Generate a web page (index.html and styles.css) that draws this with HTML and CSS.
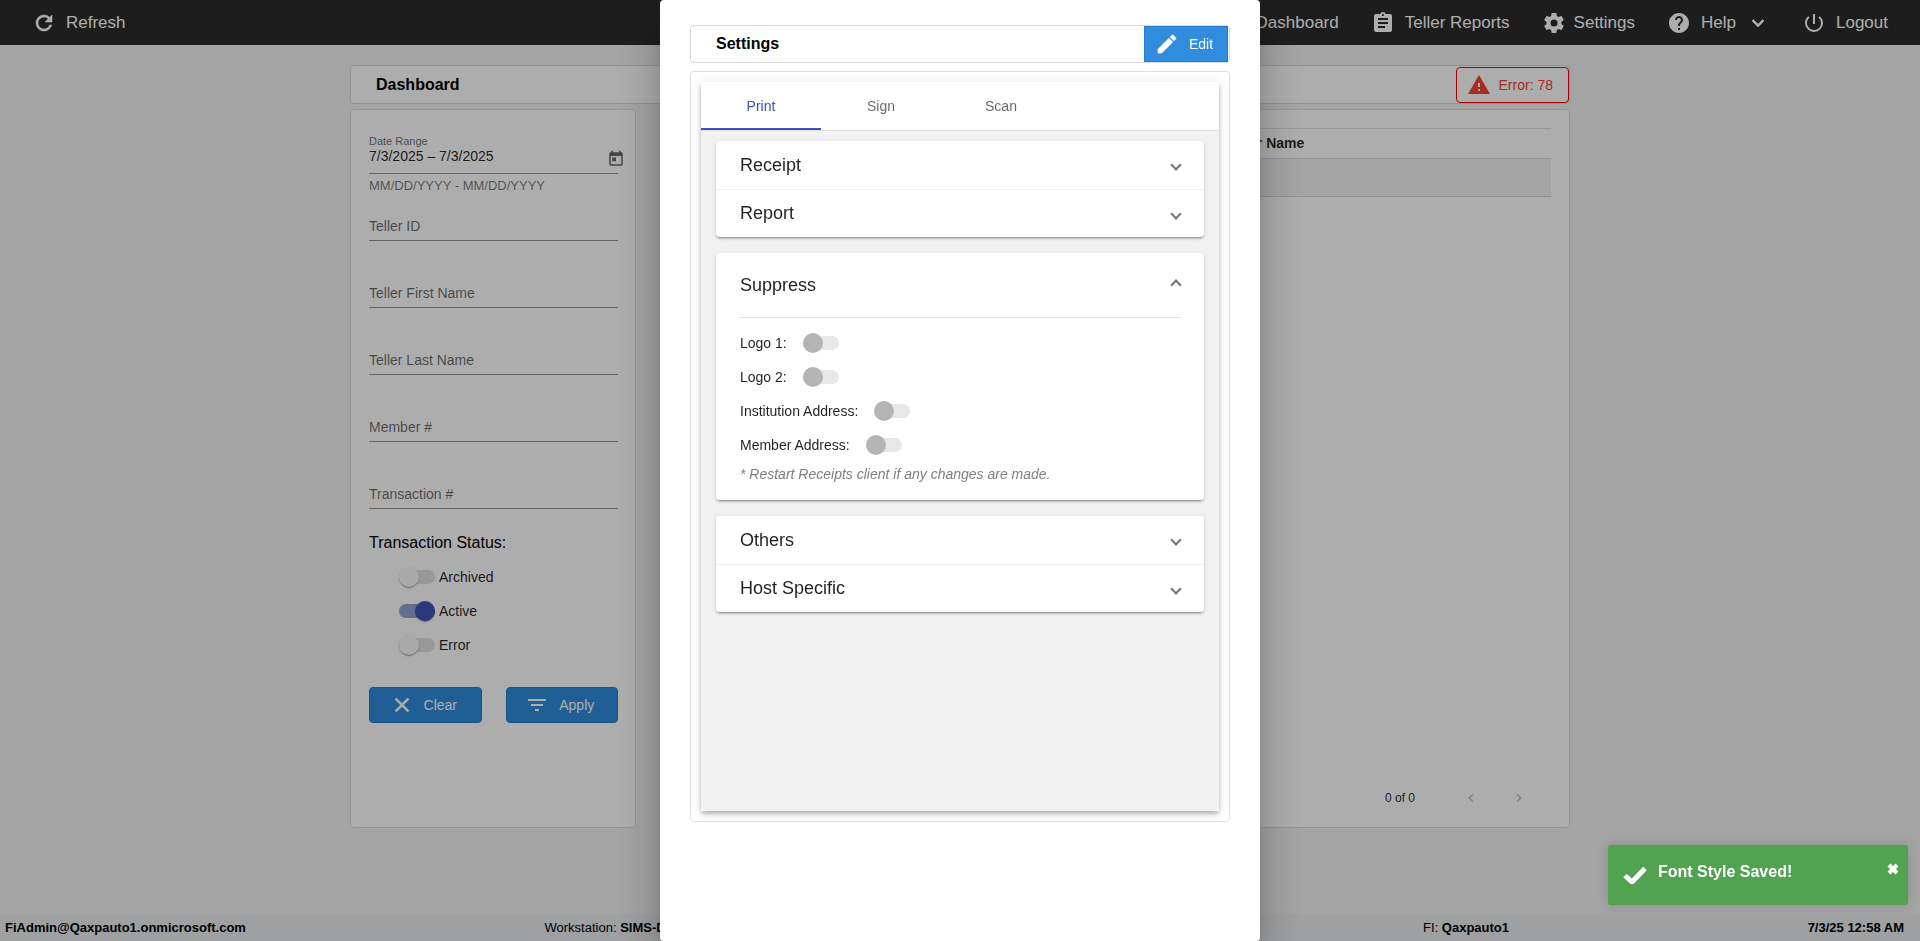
FILE: index.html
```html
<!DOCTYPE html>
<html lang="en">
<head>
  <meta charset="UTF-8" />
  <meta name="viewport" content="width=device-width, initial-scale=1.0"/>
  <title>Receipts - Settings</title>
  <link rel="stylesheet" href="styles.css">
</head>
<body>
  <header class="topbar">
    <a class="nav-item" href="#refresh">
      <svg class="icon" viewBox="0 0 24 24"><path d="M17.65 6.35A7.96 7.96 0 0 0 12 4a8 8 0 1 0 7.73 10h-2.08A6 6 0 1 1 12 6c1.66 0 3.14.69 4.22 1.78L13 11h7V4l-2.35 2.35z" stroke="currentColor" stroke-width=".6"/></svg>
      Refresh
    </a>
    <nav class="nav">
      <a class="nav-item" href="#dashboard">Dashboard</a>
      <a class="nav-item" href="#reports">
        <svg class="icon" viewBox="0 0 24 24"><path d="M19 3h-4.18C14.4 1.84 13.3 1 12 1s-2.4.84-2.82 2H5c-1.1 0-2 .9-2 2v14c0 1.1.9 2 2 2h14c1.1 0 2-.9 2-2V5c0-1.1-.9-2-2-2zm-7 0c.55 0 1 .45 1 1s-.45 1-1 1-1-.45-1-1 .45-1 1-1zm2 14H7v-2h7v2zm3-4H7v-2h10v2zm0-4H7V7h10v2z"/></svg>
        Teller Reports
      </a>
      <a class="nav-item nav-item-tight" href="#settings">
        <svg class="icon" viewBox="0 0 24 24"><path d="M19.43 12.98c.04-.32.07-.64.07-.98s-.03-.66-.07-.98l2.11-1.65c.19-.15.24-.42.12-.64l-2-3.46c-.12-.22-.39-.3-.61-.22l-2.49 1c-.52-.4-1.08-.73-1.69-.98l-.38-2.65C14.46 2.18 14.25 2 14 2h-4c-.25 0-.46.18-.49.42l-.38 2.65c-.61.25-1.17.59-1.69.98l-2.49-1c-.23-.09-.49 0-.61.22l-2 3.46c-.13.22-.07.49.12.64l2.11 1.65c-.04.32-.07.65-.07.98s.03.66.07.98l-2.11 1.65c-.19.15-.24.42-.12.64l2 3.46c.12.22.39.3.61.22l2.49-1c.52.4 1.08.73 1.69.98l.38 2.65c.03.24.24.42.49.42h4c.25 0 .46-.18.49-.42l.38-2.65c.61-.25 1.17-.59 1.69-.98l2.49 1c.23.09.49 0 .61-.22l2-3.46c.12-.22.07-.49-.12-.64l-2.11-1.65zM12 15.5a3.5 3.5 0 1 1 0-7 3.5 3.5 0 0 1 0 7z"/></svg>
        Settings
      </a>
      <a class="nav-item" href="#help">
        <svg class="icon" viewBox="0 0 24 24"><path d="M12 2C6.48 2 2 6.48 2 12s4.48 10 10 10 10-4.48 10-10S17.52 2 12 2zm1 17h-2v-2h2v2zm2.07-7.75l-.9.92C13.45 12.9 13 13.5 13 15h-2v-.5c0-1.1.45-2.1 1.17-2.83l1.24-1.26c.37-.36.59-.86.59-1.41 0-1.1-.9-2-2-2s-2 .9-2 2H8c0-2.21 1.79-4 4-4s4 1.79 4 4c0 .88-.36 1.68-.93 2.25z"/></svg>
        Help
        <svg class="icon" viewBox="0 0 24 24"><path d="M7.41 8.59L12 13.17l4.59-4.58L18 10l-6 6-6-6z" stroke="currentColor" stroke-width=".6"/></svg>
      </a>
      <a class="nav-item" href="#logout">
        <svg class="icon" viewBox="0 0 24 24"><path d="M13 3h-2v10h2V3zm4.83 2.17l-1.42 1.42A6.92 6.92 0 0 1 19 12a7 7 0 1 1-11.42-5.42L6.17 5.17A8.93 8.93 0 0 0 3 12a9 9 0 1 0 18 0c0-2.74-1.23-5.18-3.17-6.83z"/></svg>
        Logout
      </a>
    </nav>
  </header>

  <main class="workspace">
    <div class="title-bar">
      <h1>Dashboard</h1>
      <button class="error-btn" type="button">
        <svg class="icon" viewBox="0 0 24 24"><path d="M1 21h22L12 2 1 21zm12-3h-2v-2h2v2zm0-4h-2v-4h2v4z"/></svg>
        Error: 78
      </button>
    </div>

    <div class="columns">
      <form class="card filters">
        <label class="date-label" for="dateRange">Date Range</label>
        <div class="date-row">
          <input type="text" id="dateRange" value="7/3/2025 – 7/3/2025">
          <button class="date-btn" type="button" aria-label="Open calendar">
            <svg viewBox="0 0 24 24"><path d="M19 3h-1V1h-2v2H8V1H6v2H5c-1.11 0-2 .9-2 2v14c0 1.1.89 2 2 2h14c1.1 0 2-.9 2-2V5c0-1.1-.9-2-2-2zm0 16H5V8h14v11zM7 10h5v5H7z"/></svg>
          </button>
        </div>
        <div class="hint">MM/DD/YYYY - MM/DD/YYYY</div>

        <div class="fields">
          <input type="text" placeholder="Teller ID" aria-label="Teller ID">
          <input type="text" placeholder="Teller First Name" aria-label="Teller First Name">
          <input type="text" placeholder="Teller Last Name" aria-label="Teller Last Name">
          <input type="text" placeholder="Member #" aria-label="Member #">
          <input type="text" placeholder="Transaction #" aria-label="Transaction #">
        </div>

        <h2>Transaction Status:</h2>
        <div class="status-list">
          <label class="toggle-row"><input class="toggle" type="checkbox">Archived</label>
          <label class="toggle-row"><input class="toggle" type="checkbox" checked>Active</label>
          <label class="toggle-row"><input class="toggle" type="checkbox">Error</label>
        </div>

        <div class="actions">
          <button class="btn" type="reset">
            <svg class="icon" viewBox="0 0 24 24"><path d="M19 6.41L17.59 5 12 10.59 6.41 5 5 6.41 10.59 12 5 17.59 6.41 19 12 13.41 17.59 19 19 17.59 13.41 12z" stroke="currentColor" stroke-width=".6"/></svg>
            Clear
          </button>
          <button class="btn" type="button">
            <svg class="icon" viewBox="0 0 24 24"><path d="M10 18h4v-2h-4v2zM3 6v2h18V6H3zm3 7h12v-2H6v2z"/></svg>
            Apply
          </button>
        </div>
      </form>

      <section class="card results">
        <table>
          <thead>
            <tr><th></th><th class="name-col">Teller Name</th></tr>
          </thead>
          <tbody>
            <tr><td colspan="2"></td></tr>
          </tbody>
        </table>
        <div class="pager">
          <span>0 of 0</span>
          <button type="button" disabled aria-label="Previous page"><svg viewBox="0 0 24 24"><path d="M15.41 7.41L14 6l-6 6 6 6 1.41-1.41L10.83 12z"/></svg></button>
          <button type="button" disabled aria-label="Next page"><svg viewBox="0 0 24 24"><path d="M10 6L8.59 7.41 13.17 12l-4.58 4.59L10 18l6-6z"/></svg></button>
        </div>
      </section>
    </div>
  </main>

  <footer class="statusbar">
    <b>FiAdmin@Qaxpauto1.onmicrosoft.com</b>
    <span class="workstation">Workstation: <b>SIMS-D</b></span>
    <span>FI: <b>Qaxpauto1</b></span>
    <b>7/3/25 12:58 AM</b>
  </footer>

  <div class="backdrop"></div>

  <div class="dialog" role="dialog" aria-labelledby="dialogTitle">
    <div class="title-bar dialog-bar">
      <h2 id="dialogTitle">Settings</h2>
      <button class="btn edit-btn" type="button">
        <svg class="icon" viewBox="0 0 24 24"><path d="M3 17.25V21h3.75L17.81 9.94l-3.75-3.75L3 17.25zM20.71 7.04a1 1 0 0 0 0-1.41l-2.34-2.34a1 1 0 0 0-1.41 0l-1.83 1.83 3.75 3.75 1.83-1.83z" stroke="currentColor" stroke-width=".6"/></svg>
        Edit
      </button>
    </div>

    <div class="dialog-card">
      <div class="tab-group">
        <div class="tabs" role="tablist">
          <button class="tab active" role="tab" type="button" aria-selected="true">Print</button>
          <button class="tab" role="tab" type="button">Sign</button>
          <button class="tab" role="tab" type="button">Scan</button>
        </div>

        <div class="accordion">
          <div class="panel-group">
            <details><summary>Receipt</summary></details>
            <details><summary>Report</summary></details>
          </div>

          <div class="panel-group">
            <details open>
              <summary>Suppress</summary>
              <div class="panel-body">
                <label class="option">Logo 1: <input class="toggle" type="checkbox" disabled></label>
                <label class="option">Logo 2: <input class="toggle" type="checkbox" disabled></label>
                <label class="option">Institution Address: <input class="toggle" type="checkbox" disabled></label>
                <label class="option">Member Address: <input class="toggle" type="checkbox" disabled></label>
                <p class="note">* Restart Receipts client if any changes are made.</p>
              </div>
            </details>
          </div>

          <div class="panel-group">
            <details><summary>Others</summary></details>
            <details><summary>Host Specific</summary></details>
          </div>
        </div>
      </div>
    </div>
  </div>

  <div class="toast" role="alert">
    <svg class="toast-icon" viewBox="0 0 24 18"><path d="M2 9.500L9 16 22 2.500" fill="none" stroke="#fff" stroke-width="5"/></svg>
    <span>Font Style Saved!</span>
    <button type="button" aria-label="Close"><svg viewBox="0 0 12 12"><path d="M2 2l8 8M10 2l-8 8" stroke="#fff" stroke-width="4"/></svg></button>
  </div>
</body>
</html>
```

FILE: styles.css
```css
* {
    box-sizing: border-box;
}

body {
    font-family: "Liberation Sans", Arial, sans-serif;
    font-size: 14px;
    color: rgba(0, 0, 0, 0.87);
    background-color: #f2f2f2;
    margin: 0;
    height: 100vh;
    display: flex;
    flex-direction: column;
    overflow: hidden;
}

h1, h2, p {
    margin: 0;
}

input, button {
    font-family: inherit;
    font-size: 14px;
}

button {
    border: none;
    background: none;
    padding: 0;
    cursor: pointer;
}

svg {
    display: block;
}

.icon {
    width: 24px;
    height: 24px;
    fill: currentColor;
}

/* top bar */
.topbar {
    height: 45px;
    flex: none;
    display: flex;
    align-items: center;
    justify-content: space-between;
    padding: 0 32px;
    background-color: #2c2c2c;
}

.nav {
    display: flex;
    gap: 32px;
}

.nav-item {
    display: flex;
    align-items: center;
    gap: 10px;
    color: white;
    font-size: 17px;
    text-decoration: none;
}

.nav-item-tight {
    gap: 8px;
}

/* dashboard */
.workspace {
    flex: 1;
    width: 100%;
    max-width: 1220px;
    margin: 0 auto;
    padding: 20px 0 87px;
    display: flex;
    flex-direction: column;
    gap: 5px;
}

.title-bar {
    display: flex;
    align-items: center;
    justify-content: space-between;
    height: 39px;
    flex: none;
    padding-left: 25px;
    background: white;
    border: 1px solid #d8d8d8;
    border-radius: 4px;
}

.title-bar h1,
.title-bar h2 {
    font-size: 16px;
    color: black;
}

.error-btn {
    display: flex;
    align-items: center;
    gap: 8px;
    height: 36px;
    padding: 0 15px 0 10px;
    color: #f44336;
    border: 1px solid red;
    border-radius: 4px;
}

.columns {
    flex: 1;
    display: grid;
    grid-template-columns: 286px 1fr;
    gap: 24px;
}

.card {
    background: white;
    border: 1px solid #dcdcdc;
    border-radius: 4px;
}

.filters {
    padding: 24px 17px 24px 18px;
}

.date-label {
    display: block;
    font-size: 11px;
    line-height: 14px;
    color: rgba(0, 0, 0, 0.6);
}

.date-row {
    display: flex;
    align-items: flex-start;
    height: 26px;
    border-bottom: 1px solid #949494;
}

.date-row input {
    flex: 1;
    min-width: 0;
    height: 16px;
    padding: 0;
    border: none;
    background: none;
    color: rgba(0, 0, 0, 0.87);
}

.date-btn {
    margin: 2px -7px 0 0;
}

.date-btn svg {
    width: 18px;
    height: 18px;
    fill: #666;
}

.hint {
    margin-top: 4px;
    font-size: 13px;
    line-height: 16px;
    color: rgba(0, 0, 0, 0.54);
}

.fields {
    display: flex;
    flex-direction: column;
    gap: 37px;
    margin-top: 17px;
}

.fields input {
    height: 30px;
    padding: 0;
    border: none;
    border-bottom: 1px solid #949494;
    background: none;
}

.fields input::placeholder {
    color: rgba(0, 0, 0, 0.6);
}

.filters h2 {
    margin: 24px 0 7px;
    font-size: 16px;
    font-weight: normal;
    line-height: 20px;
    color: black;
}

.status-list {
    padding-left: 30px;
}

.toggle-row {
    display: flex;
    align-items: center;
    gap: 4px;
    height: 34px;
}

.toggle {
    appearance: none;
    flex: none;
    width: 36px;
    height: 14px;
    margin: 0;
    border-radius: 8px;
    background-color: rgba(0, 0, 0, 0.12);
}

.toggle::before {
    content: "";
    display: block;
    width: 20px;
    height: 20px;
    margin-top: -3px;
    border-radius: 50%;
    background-color: #fafafa;
    box-shadow: 0 2px 1px -1px rgba(0, 0, 0, 0.2), 0 1px 1px rgba(0, 0, 0, 0.14), 0 1px 3px rgba(0, 0, 0, 0.12);
}

.toggle:checked {
    background-color: rgba(63, 81, 181, 0.54);
}

.toggle:checked::before {
    margin-left: 16px;
    background-color: #3f51b5;
}

.toggle:disabled {
    background-color: #e7e7e7;
}

.toggle:disabled::before {
    background-color: #b4b4b4;
    box-shadow: none;
}

.actions {
    display: grid;
    grid-template-columns: 1fr 1fr;
    gap: 24px;
    margin-top: 25px;
}

.btn {
    display: flex;
    align-items: center;
    justify-content: center;
    gap: 10px;
    height: 36px;
    padding-right: 4px;
    color: white;
    background-color: #308cdc;
    border: 1px solid #297dc6;
    border-radius: 4px;
}

.results {
    display: flex;
    flex-direction: column;
    padding: 18px 18px 15px;
}

.results table {
    width: 100%;
    border-collapse: collapse;
}

.results th {
    height: 30px;
    padding: 0 0 2px;
    text-align: left;
    border: 1px solid #dcdfe4;
    border-width: 1px 0;
}

.name-col {
    width: 325px;
}

.results td {
    height: 38px;
    padding: 0;
    background-color: #f2f2f2;
    border-bottom: 1px solid #d5d9de;
}

.pager {
    display: flex;
    align-items: center;
    justify-content: flex-end;
    gap: 8px;
    margin-top: auto;
    padding-right: 12px;
    font-size: 12px;
}

.pager span {
    margin-right: 28px;
}

.pager button {
    display: grid;
    place-items: center;
    width: 40px;
    height: 28px;
}

.pager svg {
    width: 16px;
    height: 16px;
    fill: rgba(0, 0, 0, 0.26);
}

/* footer */
.statusbar {
    display: flex;
    align-items: center;
    justify-content: space-between;
    flex: none;
    height: 26px;
    padding: 0 16px 2px 5px;
    font-size: 13px;
    color: black;
    background-color: #e9ecef;
}

.workstation {
    width: 580px;
}

/* settings dialog */
.backdrop {
    position: fixed;
    inset: 0;
    background-color: rgba(0, 0, 0, 0.32);
}

.dialog {
    position: fixed;
    inset: 0;
    width: 600px;
    margin: 0 auto;
    padding: 25px 30px 119px;
    display: flex;
    flex-direction: column;
    gap: 8px;
    background: white;
    border-radius: 4px;
    box-shadow: 0 11px 15px -7px rgba(0, 0, 0, 0.2), 0 24px 38px 3px rgba(0, 0, 0, 0.14), 0 9px 46px 8px rgba(0, 0, 0, 0.12);
}

.dialog-bar {
    height: 38px;
    padding-right: 1px;
}

.edit-btn {
    width: 84px;
    border-radius: 0;
}

.dialog-card {
    flex: 1;
    display: flex;
    padding: 10px;
    border: 1px solid #e0e0e0;
    border-radius: 4px;
}

.tab-group {
    flex: 1;
    background-color: #f2f2f2;
    box-shadow: 0 2px 4px -1px rgba(0, 0, 0, 0.2), 0 4px 5px rgba(0, 0, 0, 0.14), 0 1px 10px rgba(0, 0, 0, 0.12);
}

.tabs {
    display: flex;
    background: white;
    border-bottom: 1px solid #e0e0e0;
}

.tab {
    width: 120px;
    height: 48px;
    padding-top: 2px;
    color: rgba(0, 0, 0, 0.6);
    border-bottom: 2px solid transparent;
}

.tab.active {
    color: #3f51b5;
    border-bottom-color: #3f51b5;
}

.accordion {
    display: flex;
    flex-direction: column;
    gap: 16px;
    padding: 10px 15px;
}

.panel-group {
    background: white;
    border-radius: 4px;
    box-shadow: 0 3px 1px -2px rgba(0, 0, 0, 0.2), 0 2px 2px rgba(0, 0, 0, 0.14), 0 1px 5px rgba(0, 0, 0, 0.12);
}

.panel-group details {
    padding: 0 24px;
}

.panel-group details + details {
    border-top: 1px solid #f0f0f0;
}

summary {
    display: flex;
    align-items: center;
    justify-content: space-between;
    height: 48px;
    font-size: 18px;
    list-style: none;
    cursor: pointer;
}

details + details summary {
    height: 47px;
}

summary::after {
    content: "";
    box-sizing: border-box;
    width: 8px;
    height: 8px;
    border: solid #757575;
    border-width: 0 2px 2px 0;
    transform: rotate(45deg);
}

details[open] summary {
    height: 64px;
}

details[open] summary::after {
    transform: rotate(225deg);
}

.panel-body {
    padding: 8px 0 16px;
    border-top: 1px solid #e0e0e0;
}

.option {
    display: flex;
    align-items: center;
    gap: 16px;
    height: 34px;
}

.note {
    margin-top: 2px;
    line-height: 20px;
    font-style: italic;
    color: gray;
}

/* toast */
.toast {
    position: fixed;
    right: 12px;
    bottom: 36px;
    width: 300px;
    height: 60px;
    display: flex;
    align-items: flex-start;
    padding: 17px 9px 14px 15px;
    font-size: 16px;
    font-weight: bold;
    line-height: 20px;
    color: white;
    background-color: #51a351;
    border-radius: 3px;
    box-shadow: 0 0 12px rgba(0, 0, 0, 0.15);
}

.toast-icon {
    width: 24px;
    height: 18px;
    margin: 4px 11px 0 0;
}

.toast button {
    margin: 1px 0 0 auto;
}

.toast button svg {
    width: 12px;
    height: 12px;
}
```
